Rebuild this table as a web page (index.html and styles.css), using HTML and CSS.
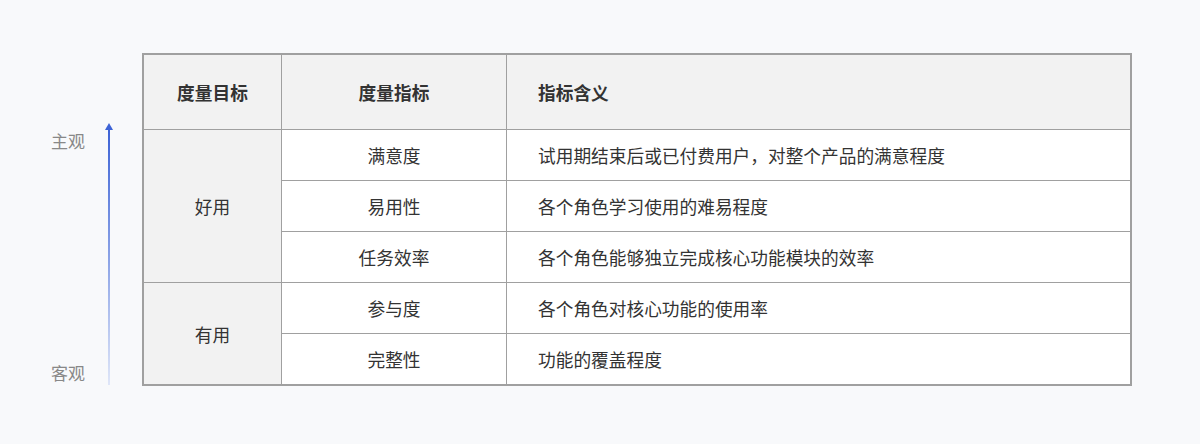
FILE: index.html
```html
<!DOCTYPE html>
<html lang="zh">
<head>
<meta charset="utf-8">
<link rel="stylesheet" href="styles.css">
</head>
<body>
<div class="page">
  <div class="side">
    <div class="labels">
      <span class="lbl">主观</span>
      <span class="lbl">客观</span>
    </div>
    <svg class="arrow" width="10" height="262" viewBox="0 0 10 262">
      <defs>
        <linearGradient id="g" x1="0" y1="0" x2="0" y2="1">
          <stop offset="0" stop-color="#3d63d6"/>
          <stop offset="0.5" stop-color="#8aa2e6"/>
          <stop offset="1" stop-color="#dfe6f8"/>
        </linearGradient>
      </defs>
      <rect x="4" y="6" width="2" height="256" fill="url(#g)"/>
      <path d="M5 0 L9 7 L1 7 Z" fill="#3d63d6"/>
    </svg>
  </div>
  <table class="metrics">
    <thead>
      <tr>
        <th class="c1">度量目标</th>
        <th class="c2">度量指标</th>
        <th class="c3">指标含义</th>
      </tr>
    </thead>
    <tbody>
      <tr>
        <td class="c1 goal" rowspan="3">好用</td>
        <td class="c2">满意度</td>
        <td class="c3">试用期结束后或已付费用户，对整个产品的满意程度</td>
      </tr>
      <tr>
        <td class="c2">易用性</td>
        <td class="c3">各个角色学习使用的难易程度</td>
      </tr>
      <tr>
        <td class="c2">任务效率</td>
        <td class="c3">各个角色能够独立完成核心功能模块的效率</td>
      </tr>
      <tr>
        <td class="c1 goal" rowspan="2">有用</td>
        <td class="c2">参与度</td>
        <td class="c3">各个角色对核心功能的使用率</td>
      </tr>
      <tr>
        <td class="c2">完整性</td>
        <td class="c3">功能的覆盖程度</td>
      </tr>
    </tbody>
  </table>
</div>
</body>
</html>
```

FILE: styles.css
```css
html, body {
  margin: 0;
  padding: 0;
  background: #f8f9fb;
}
body {
  font-family: "Noto Sans CJK SC", "Noto Sans", sans-serif;
  color: #333;
  width: 1200px;
  height: 444px;
  overflow: hidden;
}
.page {
  display: flex;
  align-items: flex-start;
  padding-top: 53px;
}
.side {
  width: 142px;
  display: flex;
  align-items: flex-start;
  padding-top: 70px;
  box-sizing: border-box;
}
.labels {
  margin-left: 51px;
  width: 36px;
  height: 262px;
  display: flex;
  flex-direction: column;
  justify-content: space-between;
  padding-top: 7px;
  padding-bottom: 1px;
  box-sizing: border-box;
}
.lbl {
  font-size: 17px;
  line-height: 22px;
  color: #888;
  white-space: nowrap;
}
.arrow {
  display: block;
  margin-left: 17px;
}
.metrics {
  border-collapse: collapse;
  border: 2px solid #a0a0a0;
  font-size: 17.7px;
}
.metrics th, .metrics td {
  border: 1px solid #a0a0a0;
  padding: 0;
}
.metrics th {
  height: 74px;
  background: #f2f2f2;
  font-weight: 600;
  color: #333;
}
.metrics td {
  height: 50px;
  background: #fff;
}
.c1 { width: 137px; text-align: center; }
.c2 { width: 224px; text-align: center; }
.c3 { width: 592px; text-align: left; padding-left: 31px !important; }
.metrics td.goal {
  background: #f2f2f2;
}
```
